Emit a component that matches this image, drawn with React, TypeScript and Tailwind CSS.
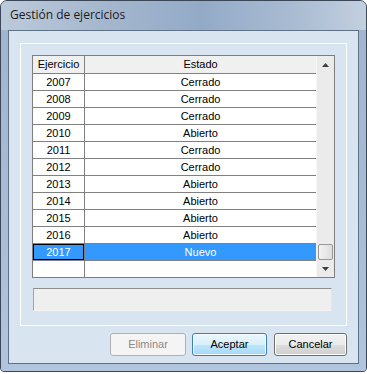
const rows = [
  ["2007", "Cerrado"],
  ["2008", "Cerrado"],
  ["2009", "Cerrado"],
  ["2010", "Abierto"],
  ["2011", "Cerrado"],
  ["2012", "Cerrado"],
  ["2013", "Abierto"],
  ["2014", "Abierto"],
  ["2015", "Abierto"],
  ["2016", "Abierto"],
];

const Arrow = ({ down }: { down?: boolean }) => (
  <svg width="7" height="4" viewBox="0 0 7 4">
    <polygon points={down ? "0,0 7,0 3.5,4" : "3.5,0 7,4 0,4"} fill="#404040" />
  </svg>
);

export default function App() {
  return (
    <div className="h-[374px] w-[367px] bg-white font-['Liberation_Sans',Arial,sans-serif] text-[11px] text-black">
      <div className="flex h-[372px] flex-col overflow-hidden rounded-t-[7px] rounded-b-[4px] border border-[#3b4756] bg-[#a9bdd6]">
        {/* title bar */}
        <div className="flex h-[29px] items-center bg-[linear-gradient(90deg,#bccadb_0%,#a3b6cd_30%,#93aac7_55%,#a9bbd2_80%,#c2cfdf_100%)] pb-px pl-[9px] font-['Open_Sans',sans-serif] text-[12px] text-[#1b1b1b]">
          Gestión de ejercicios
        </div>

        <div className="flex flex-1 flex-col bg-[linear-gradient(180deg,#a3b5cc_0%,#a9bdd6_60%,#b1c6de_100%)] px-[7px] pb-[7px]">
          <div className="flex flex-1 flex-col border border-[#5f7186] bg-[#d9e4f1]">
            <div className="mx-[11px] mt-[12px] flex h-[283px] flex-col border border-white px-[11px] pt-[11px]">
              {/* grid */}
              <div className="flex h-[223px] w-[303px] border border-[#7e7e7e] bg-white">
                <div className="flex w-[283px] flex-col">
                  <div className="flex h-[18px] border-b border-[#808080] bg-[#f0f0f0]">
                    <div className="flex w-[52px] items-center justify-center border-r border-[#808080]">Ejercicio</div>
                    <div className="flex flex-1 items-center justify-center">Estado</div>
                  </div>
                  {rows.map(([year, state]) => (
                    <div key={year} className="flex h-[17px] border-b border-[#808080]">
                      <div className="flex w-[52px] items-center justify-center border-r border-[#808080]">{year}</div>
                      <div className="flex flex-1 items-center justify-center">{state}</div>
                    </div>
                  ))}
                  <div className="flex h-[17px] border-b border-[#808080] bg-[#3399ff] text-white">
                    <div className="w-[52px] border-r border-[#808080]">
                      <div className="flex h-full items-center justify-center border border-black">2017</div>
                    </div>
                    <div className="flex flex-1 items-center justify-center">Nuevo</div>
                  </div>
                  <div className="flex h-[16px]">
                    <div className="w-[52px] border-r border-[#808080]" />
                    <div className="flex-1" />
                  </div>
                </div>
                {/* scrollbar */}
                <div className="flex w-[18px] flex-col border-l border-[#f7f7f7] bg-[#ebebeb]">
                  <div className="flex h-[17px] items-center justify-center">
                    <Arrow />
                  </div>
                  <div className="flex flex-1 flex-col justify-end px-px">
                    <div className="h-[16px] rounded-[2px] border border-[#979797] bg-[linear-gradient(90deg,#f2f2f2,#dedede)]" />
                  </div>
                  <div className="flex h-[17px] items-center justify-center">
                    <Arrow down />
                  </div>
                </div>
              </div>

              {/* text box */}
              <div className="mt-[10px] ml-px h-[23px] w-[299px] border border-t-[#8e8e8e] border-l-[#a3a3a3] border-r-[#e6e6e6] border-b-[#f4f4f4] bg-[#efefef]" />
            </div>

            {/* buttons */}
            <div className="mt-[7px] mr-[11px] flex justify-end">
              <button className="flex h-[23px] w-[76px] items-center justify-center rounded-[3px] border border-[#adb2b5] bg-[#f4f4f4] text-[#8a8a8a]">
                Eliminar
              </button>
              <button className="ml-[6px] flex h-[23px] w-[75px] items-center justify-center rounded-[3px] border border-[#3c7fb1] bg-[linear-gradient(180deg,#eaf6fd_0%,#d9f0fc_50%,#bee6fd_50%,#a7d9f5_100%)] shadow-[inset_0_0_0_1px_#f5fbfe]">
                Aceptar
              </button>
              <button className="ml-[7px] flex h-[23px] w-[73px] items-center justify-center rounded-[3px] border border-[#707070] bg-[linear-gradient(180deg,#f2f2f2_0%,#ebebeb_50%,#dddddd_50%,#cfcfcf_100%)] shadow-[inset_0_0_0_1px_#fcfcfc]">
                Cancelar
              </button>
            </div>
          </div>
        </div>
      </div>
    </div>
  );
}
